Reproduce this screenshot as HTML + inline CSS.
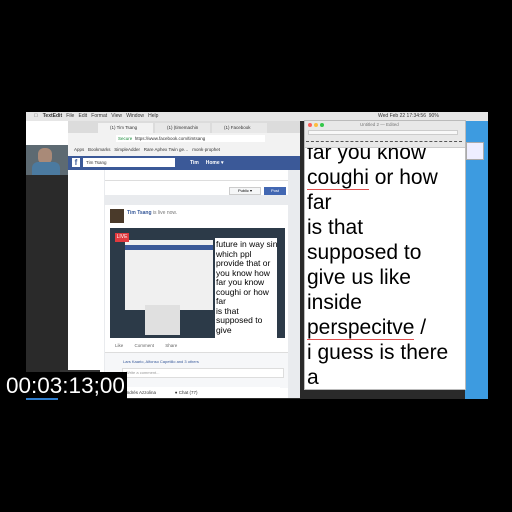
<!DOCTYPE html>
<html><head><meta charset="utf-8"><style>
*{margin:0;padding:0;box-sizing:border-box}
body{width:512px;height:512px;background:#000;position:relative;overflow:hidden;font-family:"Liberation Sans",sans-serif}
.a{position:absolute}
.big div{height:25px;line-height:25px}
.sm div{height:9.5px;line-height:9.5px}
</style></head><body>
<!-- desktop -->
<div class="a" style="left:26px;top:112px;width:462px;height:287px;background:#2a2a2a"></div>
<div class="a" style="left:465px;top:120px;width:23px;height:279px;background:#3d9be0"></div>
<!-- menubar -->
<div class="a" style="left:26px;top:112px;width:462px;height:9px;background:#e6e6e6;font-size:5px;line-height:9px;color:#333">
<span style="margin-left:8px">&#63743;</span><b style="margin-left:5px">TextEdit</b>&nbsp;&nbsp; File&nbsp;&nbsp; Edit&nbsp;&nbsp; Format&nbsp;&nbsp; View&nbsp;&nbsp; Window&nbsp;&nbsp; Help
<span class="a" style="left:352px;top:0">Wed Feb 22 17:34:56&nbsp; 90%</span></div>
<!-- left panel -->
<div class="a" style="left:26px;top:121px;width:42px;height:24px;background:#fff"></div>
<div class="a" style="left:26px;top:145px;width:42px;height:30px;background:#5d6a72"></div>
<div class="a" style="left:38px;top:148px;width:14px;height:16px;border-radius:6px;background:#a98a78"></div>
<div class="a" style="left:32px;top:162px;width:28px;height:13px;border-radius:6px 6px 0 0;background:#4b7aa0"></div>
<div class="a" style="left:68px;top:343px;width:30px;height:30px;background:#6b4a30"></div>
<!-- browser -->
<div class="a" style="left:68px;top:121px;width:232px;height:277px;background:#e9ebee"></div>
<div class="a" style="left:68px;top:121px;width:232px;height:12px;background:#dcdcdc;font-size:4.5px;line-height:12px;color:#333">
<span class="a" style="left:30px;top:2px;width:55px;height:10px;background:#f2f2f2;line-height:10px;padding-left:12px">(1) Tim Tsang</span>
<span class="a" style="left:87px;top:2px;width:55px;height:10px;background:#e8e8e8;line-height:10px;padding-left:12px">(1) (timemachin</span>
<span class="a" style="left:144px;top:2px;width:55px;height:10px;background:#e8e8e8;line-height:10px;padding-left:12px">(1) Facebook</span></div>
<div class="a" style="left:68px;top:133px;width:232px;height:11px;background:#f2f2f2;font-size:4.5px;line-height:11px;color:#1a8a3a"><span style="margin-left:48px;background:#fff;padding:1px 60px 1px 2px">Secure &nbsp;<span style="color:#333">https://www.facebook.com/timtsang</span></span></div>
<div class="a" style="left:68px;top:144px;width:232px;height:12px;background:#f2f2f2;font-size:4.5px;line-height:12px;color:#333;padding-left:6px">Apps &nbsp; Bookmarks &nbsp; SimpleAdder &nbsp; Rare Aphex Twin ge… &nbsp; monk·prophet</div>
<div class="a" style="left:68px;top:156px;width:232px;height:14px;background:#3b5998"></div>
<div class="a" style="left:72px;top:158px;width:8px;height:9px;background:#fff;color:#3b5998;font-size:8px;line-height:10px;text-align:center;font-weight:bold">f</div>
<div class="a" style="left:83px;top:158px;width:92px;height:9px;background:#fff;font-size:4.5px;line-height:9px;padding-left:3px;color:#333">Tim Tsang</div>
<div class="a" style="left:190px;top:156px;font-size:5px;line-height:14px;color:#fff;font-weight:bold">Tim &nbsp;&nbsp;&nbsp; Home ▾</div>
<div class="a" style="left:68px;top:170px;width:36px;height:228px;background:#fff"></div>
<div class="a" style="left:105px;top:170px;width:183px;height:25px;background:#fff"></div>
<div class="a" style="left:105px;top:180px;width:183px;height:15px;background:#fff;border-top:1px solid #ddd"></div>
<div class="a" style="left:264px;top:187px;width:22px;height:8px;background:#4267b2;color:#fff;font-size:4px;line-height:8px;text-align:center">Post</div>
<div class="a" style="left:229px;top:187px;width:32px;height:8px;background:#f5f6f7;border:1px solid #ccc;font-size:4px;line-height:6px;text-align:center">Public ▾</div>
<div class="a" style="left:105px;top:205px;width:183px;height:193px;background:#fff"></div>
<div class="a" style="left:110px;top:209px;width:14px;height:14px;background:#4a3a2a"></div>
<div class="a" style="left:127px;top:210px;font-size:5px;color:#365899;font-weight:bold">Tim Tsang <span style="font-weight:normal;color:#777">is live now.</span></div>
<!-- video thumb -->
<div class="a" style="left:110px;top:228px;width:175px;height:110px;background:#2c3a48"></div>
<div class="a" style="left:125px;top:240px;width:88px;height:70px;background:#f0f0f0"></div>
<div class="a" style="left:125px;top:245px;width:88px;height:5px;background:#3b5998"></div>
<div class="a" style="left:145px;top:305px;width:35px;height:30px;background:#e0e0e0"></div>
<div class="a" style="left:115px;top:233px;width:14px;height:9px;background:#e0393e;color:#fff;font-size:5px;line-height:9px;text-align:center">LIVE</div>
<div class="a" style="left:215px;top:238px;width:62px;height:100px;background:#fff"></div>
<div class="a sm" style="left:216px;top:240px;font-size:8.5px;color:#000;overflow:hidden;height:98px">
<div>future in way sin</div><div>which ppl</div><div>provide that or</div><div>you know how</div><div>far you know</div><div>coughi or how</div><div>far</div><div>is that</div><div>supposed to</div><div>give</div></div>
<div class="a" style="left:105px;top:339px;width:183px;height:14px;font-size:4.5px;line-height:14px;color:#666;padding-left:10px;border-bottom:1px solid #ddd">Like &nbsp;&nbsp;&nbsp;&nbsp;&nbsp;&nbsp;&nbsp; Comment &nbsp;&nbsp;&nbsp;&nbsp;&nbsp;&nbsp;&nbsp; Share</div>
<div class="a" style="left:105px;top:353px;width:183px;height:35px;background:#f6f7f9;font-size:4px;color:#365899;padding:6px 0 0 18px">Lars Kaario, Alfonso Capetillo and 3 others</div>
<div class="a" style="left:122px;top:368px;width:162px;height:10px;background:#fff;border:1px solid #ddd;font-size:4px;line-height:8px;color:#999;padding-left:3px">Write a comment...</div>
<div class="a" style="left:120px;top:387px;width:160px;height:11px;background:#fff;font-size:4.5px;line-height:11px;color:#333">● Andrés Azzolina &nbsp;&nbsp;&nbsp;&nbsp;&nbsp;&nbsp;&nbsp;&nbsp;&nbsp;&nbsp;&nbsp;&nbsp;&nbsp; ● Chat (77)</div>
<div class="a" style="left:60px;top:370px;width:40px;height:8px;background:#333;font-size:4px;color:#ccc;line-height:8px;text-align:center">Current Cell</div>
<!-- TextEdit -->
<div class="a" style="left:304px;top:120px;width:162px;height:270px;background:#fff;border:1px solid #bbb"></div>
<div class="a big" style="left:307px;top:142px;width:157px;height:248px;overflow:hidden;font-size:21px;color:#000">
<div style="margin-top:-2px">far you know</div>
<div><span style="border-bottom:1px solid #e05050">coughi</span> or how</div>
<div>far</div><div>is that</div><div>supposed to</div><div>give us like</div><div>inside</div>
<div><span style="border-bottom:1px solid #e05050">perspecitve</span> /</div>
<div>i guess is there</div><div>a</div></div>
<div class="a" style="left:305px;top:121px;width:160px;height:27px;background:#e8e8e8;border-bottom:1px solid #ccc"></div>
<div class="a" style="left:308px;top:123px;width:4px;height:4px;border-radius:50%;background:#fc605c"></div>
<div class="a" style="left:314px;top:123px;width:4px;height:4px;border-radius:50%;background:#fdbc40"></div>
<div class="a" style="left:320px;top:123px;width:4px;height:4px;border-radius:50%;background:#34c84a"></div>
<div class="a" style="left:360px;top:121px;font-size:4.5px;color:#777;line-height:7px">Untitled 2 — Edited</div>
<div class="a" style="left:308px;top:130px;width:150px;height:5px;background:#f8f8f8;border:1px solid #ccc"></div>
<div class="a" style="left:306px;top:141px;width:156px;height:1px;border-top:1px dashed #555"></div>
<div class="a" style="left:466px;top:142px;width:18px;height:18px;background:#eef;border:1px solid #aaa"></div>
<!-- timecode -->
<div class="a" style="left:0;top:372px;width:127px;height:27px;background:#000"></div>
<div class="a" style="left:6px;top:372px;font-size:22.5px;line-height:27px;color:#fff">00:03:13;00</div>
<div class="a" style="left:26px;top:398px;width:32px;height:2px;background:#2f7fd0"></div>
</body></html>
